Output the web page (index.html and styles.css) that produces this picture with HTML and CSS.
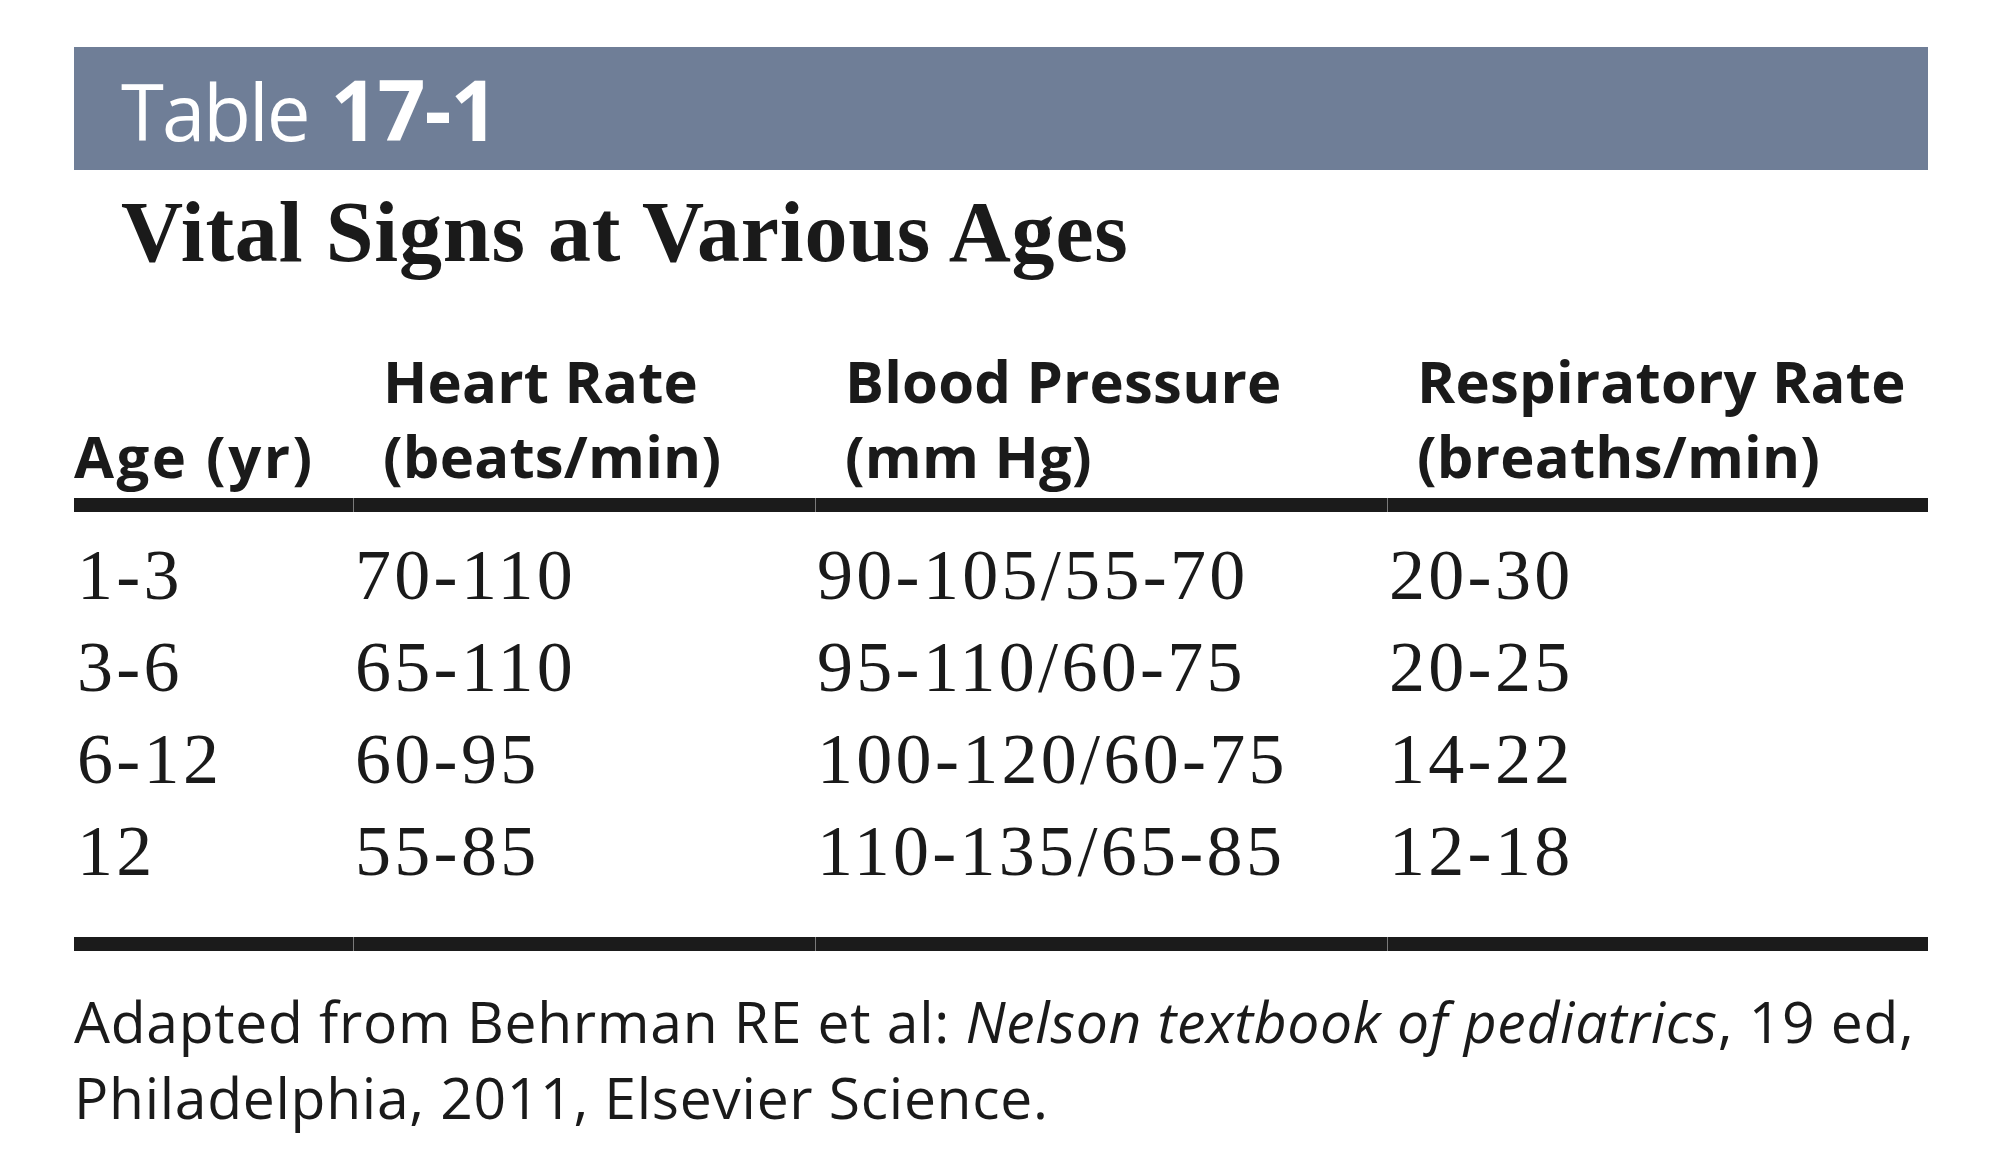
FILE: index.html
```html
<!DOCTYPE html>
<html lang="en">
<head>
<meta charset="utf-8">
<title>Table 17-1 Vital Signs at Various Ages</title>
<link rel="stylesheet" href="styles.css">
</head>
<body>
<div class="page">
  <div class="bar"><span class="bar-label">Table</span><span class="bar-num">17-1</span></div>
  <h1 class="title">Vital Signs at Various Ages</h1>
  <table class="vitals">
    <colgroup>
      <col class="col-age"><col class="col-hr"><col class="col-bp"><col class="col-rr">
    </colgroup>
    <thead>
      <tr class="head">
        <th class="age">Age (yr)</th>
        <th>Heart Rate<br>(beats/min)</th>
        <th>Blood Pressure<br>(mm Hg)</th>
        <th>Respiratory Rate<br>(breaths/min)</th>
      </tr>
      <tr class="rule"><td></td><td></td><td></td><td></td></tr>
    </thead>
    <tbody>
      <tr class="first"><td class="age">1-3</td><td>70-110</td><td>90-105/55-70</td><td>20-30</td></tr>
      <tr><td class="age">3-6</td><td>65-110</td><td>95-110/60-75</td><td>20-25</td></tr>
      <tr><td class="age">6-12</td><td>60-95</td><td>100-120/60-75</td><td>14-22</td></tr>
      <tr class="last"><td class="age">12</td><td>55-85</td><td>110-135/65-85</td><td>12-18</td></tr>
    </tbody>
    <tfoot>
      <tr class="rule"><td></td><td></td><td></td><td></td></tr>
    </tfoot>
  </table>
  <p class="source">Adapted from Behrman RE et al: <em>Nelson textbook of pediatrics</em>, 19 ed,<br>Philadelphia, 2011, Elsevier Science.</p>
</div>
</body>
</html>
```
FILE: styles.css
```css
html, body {
  margin: 0;
  padding: 0;
  background: #ffffff;
}

.page {
  width: 1854px;
  padding: 47px 0 0 74px;
  color: #1a1a1a;
}

.bar {
  height: 123px;
  background: #6f7e97;
  color: #ffffff;
  display: flex;
  align-items: baseline;
  padding: 0 0 0 47px;
  font-family: "Open Sans", "Liberation Sans", sans-serif;
  line-height: 123px;
  box-sizing: border-box;
}

.bar-label {
  font-size: 78px;
  font-weight: 400;
  letter-spacing: -2px;
  margin-right: 22px;
}

.bar-num {
  font-size: 84px;
  font-weight: 700;
  letter-spacing: -1px;
}

.title {
  margin: 19px 0 0 47px;
  font-family: "Liberation Serif", "Times New Roman", serif;
  font-weight: 700;
  font-size: 86px;
  line-height: 86px;
  letter-spacing: 0.8px;
  color: #1a1a1a;
}

.vitals {
  margin-top: 68px;
  width: 1854px;
  table-layout: fixed;
  border-collapse: collapse;
}

.col-age { width: 279px; }
.col-hr { width: 462px; }
.col-bp { width: 572px; }
.col-rr { width: 541px; }

.head th {
  text-align: left;
  vertical-align: bottom;
  font-family: "Open Sans", "Liberation Sans", sans-serif;
  font-weight: 700;
  font-size: 58px;
  line-height: 75px;
  letter-spacing: 0.2px;
  padding: 0 0 5px 30px;
  white-space: nowrap;
}

.head th.age {
  padding-left: 0;
  letter-spacing: 2.5px;
}

.rule td {
  height: 14px;
  padding: 0;
  background: #1b1b1b;
}

.rule td + td {
  border-left: 1px solid #7a7a7a;
}

tbody td {
  font-family: "Liberation Serif", "Times New Roman", serif;
  font-size: 72px;
  line-height: 92px;
  letter-spacing: 3.3px;
  padding: 0 0 0 2px;
  white-space: nowrap;
}

tbody td.age {
  padding-left: 3px;
}

tbody tr.first td {
  padding-top: 17px;
}

tbody tr.last td {
  padding-bottom: 40px;
}

.source {
  margin: 32px 0 0 0;
  font-family: "Open Sans", "Liberation Sans", sans-serif;
  font-size: 57px;
  line-height: 76px;
  letter-spacing: 0.7px;
  color: #1a1a1a;
}

.source em {
  font-style: italic;
}
```
